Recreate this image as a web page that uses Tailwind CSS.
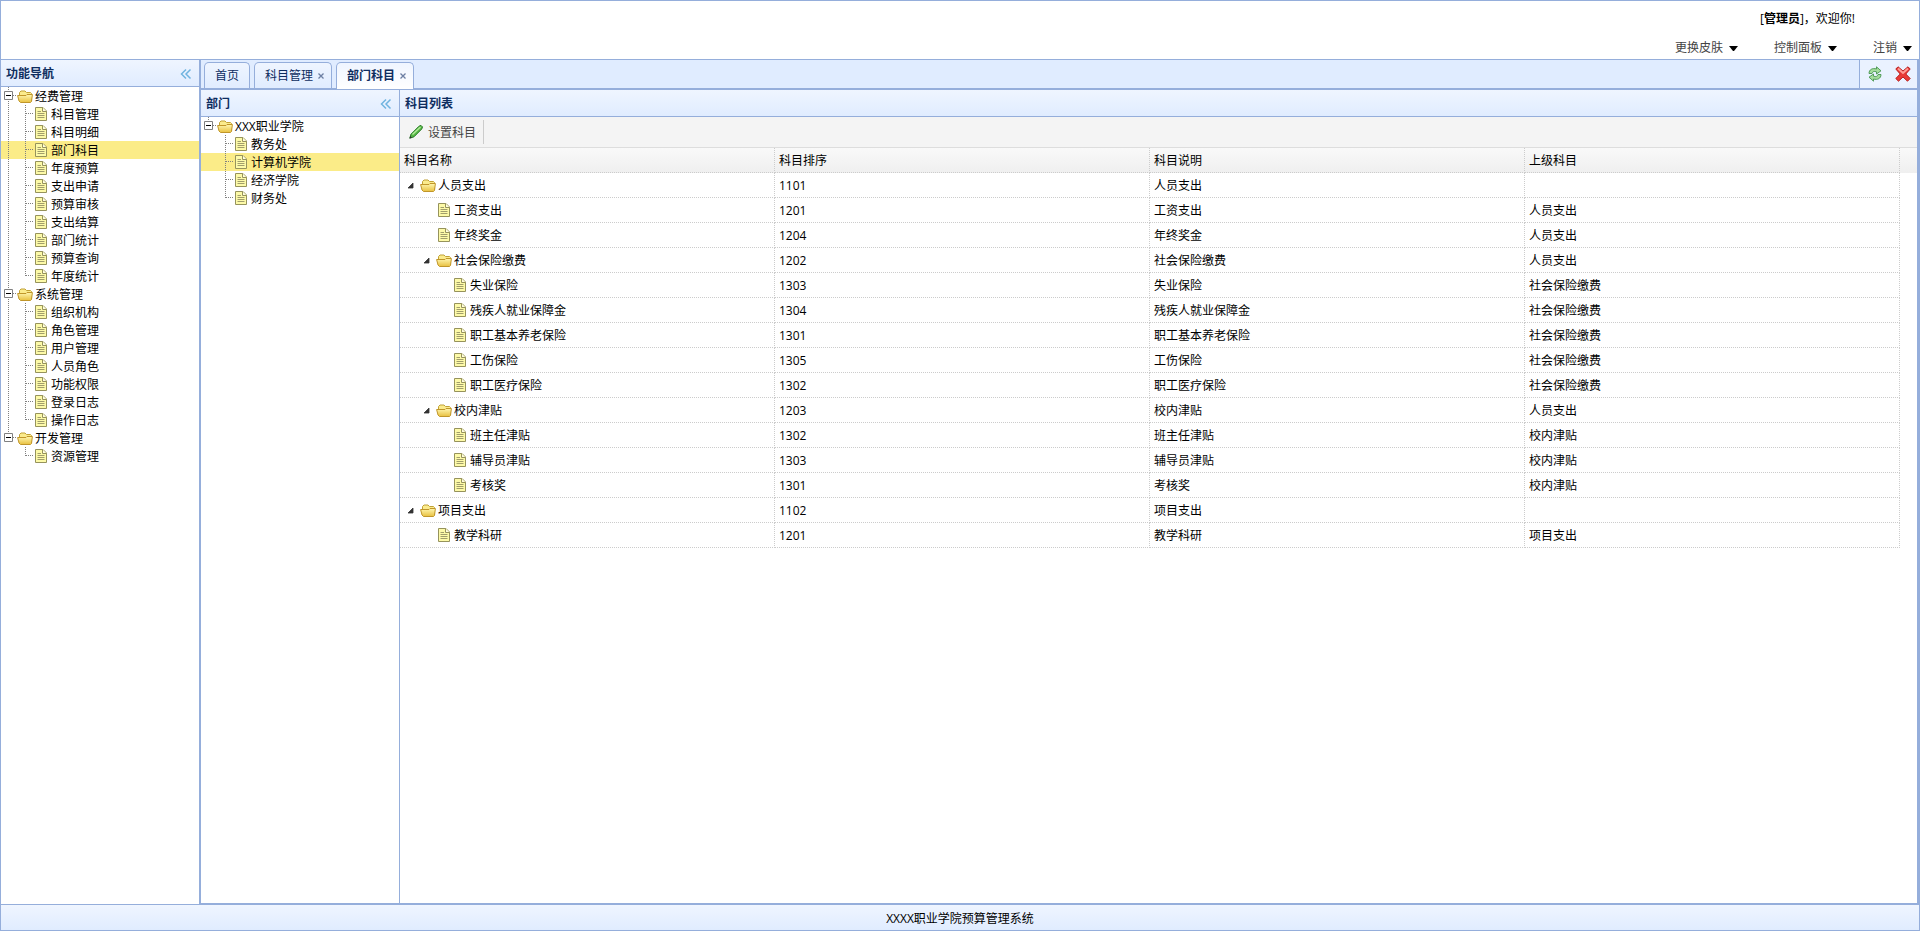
<!DOCTYPE html>
<html lang="zh-CN">
<head>
<meta charset="utf-8">
<title>XXXX职业学院预算管理系统</title>
<script src="https://cdn.jsdelivr.net/npm/@tailwindcss/browser@4"></script>
</head>
<body class="flex h-screen flex-col overflow-hidden border border-[#95aedb] bg-white font-['Open_Sans','Noto_Sans_CJK_SC',sans-serif] text-xs leading-[18px] text-black">
<svg class="absolute size-0" xmlns="http://www.w3.org/2000/svg" aria-hidden="true">
  <defs>
    <linearGradient id="gold" x1="0" y1="0" x2="0" y2="1"><stop offset="0" stop-color="#fff7b0"/><stop offset="1" stop-color="#e8c040"/></linearGradient>
  </defs>
  <symbol id="folder" viewBox="0 0 16 18">
    <path d="M2.500 14V5.500l1.500-1.500h4l1.500 1.500h4l1 1V14Z" fill="#fbeb8c" stroke="#c0a136"/>
    <path d="M.6 8.500H9l1-1h5.400l-.9 7-1 1h-10l-1.500-1.500Z" fill="url(#gold)" stroke="#c0962a" stroke-linejoin="round"/>
  </symbol>
  <symbol id="file" viewBox="0 0 16 18">
    <path d="M2.500 2.500h7.500l3.500 3.500v9.500h-11Z" fill="#fdfaa8" stroke="#96935c"/>
    <path d="M9.500 2.500V6.500H13.500" fill="#fffde0" stroke="#96935c"/>
    <path d="M4.500 6.500H8M4.500 8.500h7M4.500 10.500h7M4.500 12.500h7" stroke="#a19e6c" fill="none"/>
  </symbol>
  <symbol id="minus" viewBox="0 0 16 18">
    <path d="M3.500 4.500h8v8h-8Z" fill="#fff" stroke="#808080"/><path d="M5 8.500h5" stroke="#000"/>
  </symbol>
  <symbol id="arrow" viewBox="0 0 16 18"><path d="M9 7v5H4Z" fill="#333" stroke="#333" stroke-width=".8" stroke-linejoin="round"/></symbol>
  <symbol id="collapse" viewBox="0 0 16 16"><path d="M8 3.500 3.500 8 8 12.500M12.500 3.500 8 8l4.500 4.500" fill="none" stroke="#70b4e0" stroke-width="1.500"/></symbol>
  <symbol id="close" viewBox="0 0 8 8"><path d="m1.500 1.500 5 5m0-5-5 5" stroke="#6d7fa3" stroke-width="1.300"/></symbol>
</svg>

<header class="flex h-[58px] shrink-0 flex-col items-end">
  <p class="mt-[9px] mr-[64px] h-[22px]">[<strong>管理员</strong>]，欢迎你!</p>
  <nav class="mr-[7px] flex gap-[36px] pt-[7px] text-[#444]">
    <button class="flex items-center gap-[6px]">更换皮肤<svg class="h-[5px] w-[9px]" viewBox="0 0 9 5"><path d="M0 0h9L5 5H4Z"/></svg></button>
    <button class="flex items-center gap-[6px]">控制面板<svg class="h-[5px] w-[9px]" viewBox="0 0 9 5"><path d="M0 0h9L5 5H4Z"/></svg></button>
    <button class="flex items-center gap-[6px]">注销<svg class="h-[5px] w-[9px]" viewBox="0 0 9 5"><path d="M0 0h9L5 5H4Z"/></svg></button>
  </nav>
</header>

<div class="flex min-h-0 flex-1 border-t border-[#95aedb]">
  <aside class="w-[198px] shrink-0 border-b border-[#95aedb]">
    <div class="flex h-[27px] items-center justify-between border-b border-[#95aedb] bg-linear-to-b from-[#eff5ff] to-[#e0ecff] px-[5px] pt-[2px] font-bold text-[#0e2d5f]">
      <h2>功能导航</h2><button aria-label="折叠功能导航"><svg class="size-4"><use href="#collapse"/></svg></button>
    </div>
    <ul id="nav" class="leading-[20px]"></ul>
  </aside>

  <main class="flex min-w-0 flex-1 flex-col border-x-2 border-b-2 border-[#95aedb]">
    <div class="flex h-[30px] shrink-0 items-end justify-between border-b-2 border-[#95aedb] bg-[#e0ecff]">
      <div class="-mb-px flex gap-[4px] pl-[3px] text-[#0e2d5f]">
        <button class="h-[26px] rounded-t-[5px] border border-b-0 border-[#95aedb] bg-linear-to-b from-[#eff5ff] to-[#e0ecff] px-[10px]">首页</button>
        <button class="flex h-[26px] items-center gap-[4px] rounded-t-[5px] border border-b-0 border-[#95aedb] bg-linear-to-b from-[#eff5ff] to-[#e0ecff] pr-[6px] pl-[10px]">科目管理<svg class="size-2"><use href="#close"/></svg></button>
        <button class="flex h-[27px] items-center gap-[4px] rounded-t-[5px] border border-b-0 border-[#95aedb] bg-linear-to-b from-[#eff5ff] to-white pr-[6px] pl-[10px] font-bold">部门科目<svg class="size-2"><use href="#close"/></svg></button>
      </div>
      <div class="flex h-[28px] items-center gap-[12px] border-l border-[#95aedb] bg-[#eaf2ff] pr-[6px] pl-[7px]">
        <button aria-label="刷新"><svg class="size-4" viewBox="0 0 16 16" fill="#a5dc9c" stroke="#479550" stroke-linejoin="round" stroke-width=".9"><path d="M2 7.500C2 3.500 5.500 1.800 9.500 3V.8L14 4.800 9.500 8V5.800C7 5 5.500 5.500 5 7.500Z"/><path d="M14 8.500C14 12.500 10.500 14.200 6.500 13v2.200L2 11.200 6.500 8v2.200c2.500.8 4 .3 4.500-1.700Z"/></svg></button>
        <button aria-label="关闭"><svg class="size-4" viewBox="0 0 16 16"><path d="M3 .8 8 5l5-4.200L15.200 3l-4.400 5 4.400 4.500-2.700 2.700L8 11l-4.500 4.200-2.700-2.700L5.200 8 .8 3Z" fill="#e93a36" stroke="#b8201f" stroke-linejoin="round"/><path d="M3 2.500 8 7l5-4.500" fill="none" stroke="#ff9c94" stroke-width="2"/></svg></button>
      </div>
    </div>
    <div class="flex min-h-0 flex-1">
      <section class="w-[199px] shrink-0 border-r border-[#95aedb]">
        <div class="flex h-[27px] items-center justify-between border-b border-[#95aedb] bg-linear-to-b from-[#eff5ff] to-[#e0ecff] px-[5px] pt-[2px] font-bold text-[#0e2d5f]">
          <h2>部门</h2><button aria-label="折叠部门"><svg class="size-4"><use href="#collapse"/></svg></button>
        </div>
        <ul id="dept" class="leading-[20px]"></ul>
      </section>
      <section class="min-w-0 flex-1">
        <h2 class="flex h-[27px] items-center border-b border-[#95aedb] bg-linear-to-b from-[#eff5ff] to-[#e0ecff] px-[5px] pt-[2px] font-bold text-[#0e2d5f]">科目列表</h2>
        <div class="flex h-[31px] items-center border-b border-[#ddd] bg-[#f4f4f4] pl-[8px]">
          <button class="flex h-6 items-center gap-[4px] border-r border-[#ccc] pr-[7px] text-[#444]">
            <svg class="size-4" viewBox="0 0 16 16"><path d="M1.800 14.200 3 10.200 11 2.200l2-.8 1.500 1.500-.7 2L6 12.800Z" fill="#58b947" stroke="#267a25" stroke-linejoin="round"/><path d="M4.500 10.500 12.500 3" stroke="#b5ec9c" stroke-width="1.300"/><path d="m1.500 14.500.7-2.500 1.800 1.500Z" fill="#333"/></svg>
            <span class="pt-[2px]">设置科目</span></button>
        </div>
        <div class="bg-linear-to-b from-[#f9f9f9] to-[#efefef] bg-[length:100%_25px] bg-no-repeat">
        <table class="w-[calc(100%-17px)] table-fixed border-separate border-spacing-0">
          <thead><tr class="h-[25px] text-left">
            <th class="border-r border-b border-dotted border-[#ccc] px-[4px] pt-[2px] pb-0 font-normal">科目名称</th>
            <th class="border-r border-b border-dotted border-[#ccc] px-[4px] pt-[2px] pb-0 font-normal">科目排序</th>
            <th class="border-r border-b border-dotted border-[#ccc] px-[4px] pt-[2px] pb-0 font-normal">科目说明</th>
            <th class="border-r border-b border-dotted border-[#ccc] px-[4px] pt-[2px] pb-0 font-normal">上级科目</th>
          </tr></thead>
          <tbody id="rows"></tbody>
        </table>
        </div>
      </section>
    </div>
  </main>
</div>

<footer class="flex h-[25px] shrink-0 items-center justify-center bg-linear-to-b from-[#eff5ff] to-[#e0ecff] pt-[2px]">XXXX职业学院预算管理系统</footer>

<script>
const icon = (id) => `<svg class="h-[18px] w-4 shrink-0"><use href="#${id}"/></svg>`;
const guide = (d) => `<svg class="h-[18px] w-4 shrink-0" viewBox="0 0 16 18"><path d="${d}" stroke="#808080" stroke-dasharray="1 1" fill="none"/></svg>`;

function tree(target, groups, selected) {
  let html = '';
  groups.forEach(([name, kids], g) => {
    const more = g < groups.length - 1;
    html += `<li><div class="flex h-[18px]"><button class="relative flex" aria-label="收起${name}">${guide('M7.500 0V' + (more ? 18 : 9) + 'M12 8.500h4')}<span class="absolute inset-0">${icon('minus')}</span></button>${icon('folder')}<span class="pl-[2px]">${name}</span></div><ul>`;
    kids.forEach((kid, k) => {
      const tone = kid === selected ? 'flex h-[18px] bg-[#fbec88]' : 'flex h-[18px]';
      html += `<li class="${tone}">${more ? guide('M7.500 0V18') : '<span class="w-4"></span>'}${guide('M8.500 0V' + (k < kids.length - 1 ? 18 : 9) + 'M9 8.500h7')}${icon('file')}<a href="#" class="pl-[2px]">${kid}</a></li>`;
    });
    html += '</ul></li>';
  });
  document.getElementById(target).innerHTML = html;
}
tree('nav', [
  ['经费管理', ['科目管理', '科目明细', '部门科目', '年度预算', '支出申请', '预算审核', '支出结算', '部门统计', '预算查询', '年度统计']],
  ['系统管理', ['组织机构', '角色管理', '用户管理', '人员角色', '功能权限', '登录日志', '操作日志']],
  ['开发管理', ['资源管理']]
], '部门科目');
tree('dept', [['XXX职业学院', ['教务处', '计算机学院', '经济学院', '财务处']]], '计算机学院');

const a = '人员支出', b = '社会保险缴费', c = '校内津贴', d = '项目支出';
const data = [
  [0, 1, a, 1101, ''], [1, 0, '工资支出', 1201, a], [1, 0, '年终奖金', 1204, a],
  [1, 1, b, 1202, a], [2, 0, '失业保险', 1303, b], [2, 0, '残疾人就业保障金', 1304, b],
  [2, 0, '职工基本养老保险', 1301, b], [2, 0, '工伤保险', 1305, b], [2, 0, '职工医疗保险', 1302, b],
  [1, 1, c, 1203, a], [2, 0, '班主任津贴', 1302, c], [2, 0, '辅导员津贴', 1303, c],
  [2, 0, '考核奖', 1301, c], [0, 1, d, 1102, ''], [1, 0, '教学科研', 1201, d]
];
const nameCell = 'border-r border-b border-dotted border-[#ccc] px-[4px] py-0';
const cell = 'border-r border-b border-dotted border-[#ccc] px-[4px] pt-[2px] pb-0';
document.getElementById('rows').innerHTML = data.map(([level, open, name, order, parent]) =>
  `<tr class="h-[25px] bg-white"><td class="${nameCell}"><div class="flex h-[18px] leading-[20px]">${'<span class="w-4"></span>'.repeat(level)}${open ? `<button aria-label="收起${name}">${icon('arrow')}</button>` : '<span class="w-4"></span>'}${icon(open ? 'folder' : 'file')}<span class="pl-[2px]">${name}</span></div></td><td class="${cell}">${order}</td><td class="${cell}">${name}</td><td class="${cell}">${parent}</td></tr>`).join('');
</script>
</body>
</html>
